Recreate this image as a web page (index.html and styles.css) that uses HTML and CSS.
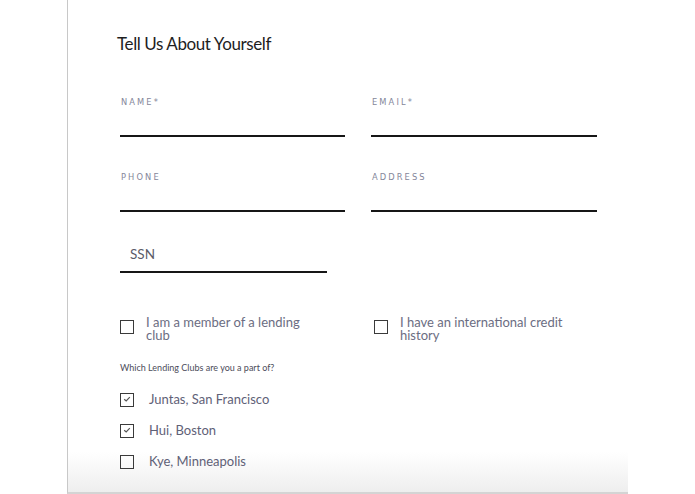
FILE: index.html
```html
<!DOCTYPE html>
<html>
<head>
<meta charset="utf-8">
<link rel="stylesheet" href="styles.css">
</head>
<body>
<div class="page">
  <div class="card">
    <h1 class="title">Tell Us About Yourself</h1>
    <div class="grid">
      <div class="field"><div class="label">NAME*</div><div class="line"></div></div>
      <div class="field"><div class="label">EMAIL*</div><div class="line"></div></div>
      <div class="field"><div class="label">PHONE</div><div class="line"></div></div>
      <div class="field"><div class="label">ADDRESS</div><div class="line"></div></div>
    </div>
    <div class="ssn">
      <div class="ssn-text">SSN</div>
    </div>
    <div class="checks">
      <div class="check"><span class="box"></span><div class="check-label"><div class="cl-line">I am a member of a lending</div><div class="cl-line">club</div></div></div>
      <div class="check"><span class="box"></span><div class="check-label"><div class="cl-line">I have an international credit</div><div class="cl-line">history</div></div></div>
    </div>
    <div class="question">Which Lending Clubs are you a part of?</div>
    <div class="clubs">
      <div class="club"><span class="box checked"><svg viewBox="0 0 14 14" width="14" height="14"><path d="M4.2 7.2 L6.2 9 L9.8 5.2" fill="none" stroke="#555" stroke-width="1.2"/></svg></span><span class="club-label">Juntas, San Francisco</span></div>
      <div class="club"><span class="box checked"><svg viewBox="0 0 14 14" width="14" height="14"><path d="M4.2 7.2 L6.2 9 L9.8 5.2" fill="none" stroke="#555" stroke-width="1.2"/></svg></span><span class="club-label">Hui, Boston</span></div>
      <div class="club"><span class="box"></span><span class="club-label">Kye, Minneapolis</span></div>
    </div>
  </div>
</div>
</body>
</html>
```
FILE: styles.css
```css
html, body {
  margin: 0;
  padding: 0;
  background: #fff;
}
.page {
  width: 695px;
  height: 494px;
  overflow: hidden;
}
.card {
  margin-left: 67px;
  width: 561px;
  height: 494px;
  box-sizing: border-box;
  border-left: 1px solid #c8c8c8;
  border-bottom: 2px solid #d4d4d4;
  padding-left: 52px;
  padding-top: 33px;
  font-family: "Lato", "Noto Sans", sans-serif;
  background: linear-gradient(to bottom, #ffffff 0, #ffffff 452px, #eeeeee 492px);
}
.title {
  margin: 0 0 0 -3px;
  font-weight: 400;
  font-size: 17px;
  line-height: 22px;
  color: #1e1e1e;
  letter-spacing: -0.4px;
}
.grid {
  margin-top: 42px;
  display: grid;
  grid-template-columns: 225px 226px;
  column-gap: 26px;
  row-gap: 35px;
}
.label {
  font-family: "DejaVu Sans", sans-serif;
  font-size: 8.3px;
  letter-spacing: 2.1px;
  color: #84869a;
  line-height: 10px;
  padding-left: 1px;
}
.line {
  margin-top: 28px;
  height: 2px;
  background: #161616;
}
.ssn {
  margin-top: 34px;
  width: 207px;
  border-bottom: 2px solid #161616;
  padding: 0 0 9px 10px;
  box-sizing: border-box;
}
.ssn-text {
  font-size: 13.5px;
  color: #5a5c68;
  line-height: 16px;
}
.checks {
  margin-top: 43px;
  display: grid;
  grid-template-columns: 254px 240px;
}
.check {
  display: flex;
  align-items: flex-start;
}
.box {
  width: 14px;
  height: 14px;
  box-sizing: border-box;
  border: 1.5px solid #3a3a3a;
  flex: none;
  display: block;
  position: relative;
}
.check .box {
  margin-top: 4px;
}
.box svg {
  position: absolute;
  left: -1.5px;
  top: -1.5px;
}
.check-label {
  margin-left: 12px;
  font-size: 13px;
  color: #6b6d82;
}
.cl-line {
  height: 12.5px;
  line-height: 12.5px;
  white-space: nowrap;
}
.question {
  margin-top: 21px;
  font-size: 9px;
  color: #4c4c5a;
  line-height: 12px;
}
.clubs {
  margin-top: 18px;
  display: flex;
  flex-direction: column;
  gap: 16px;
}
.club {
  display: flex;
  align-items: center;
  height: 15px;
}
.club-label {
  margin-left: 15px;
  font-size: 13px;
  color: #5f6177;
  line-height: 15px;
}
```
